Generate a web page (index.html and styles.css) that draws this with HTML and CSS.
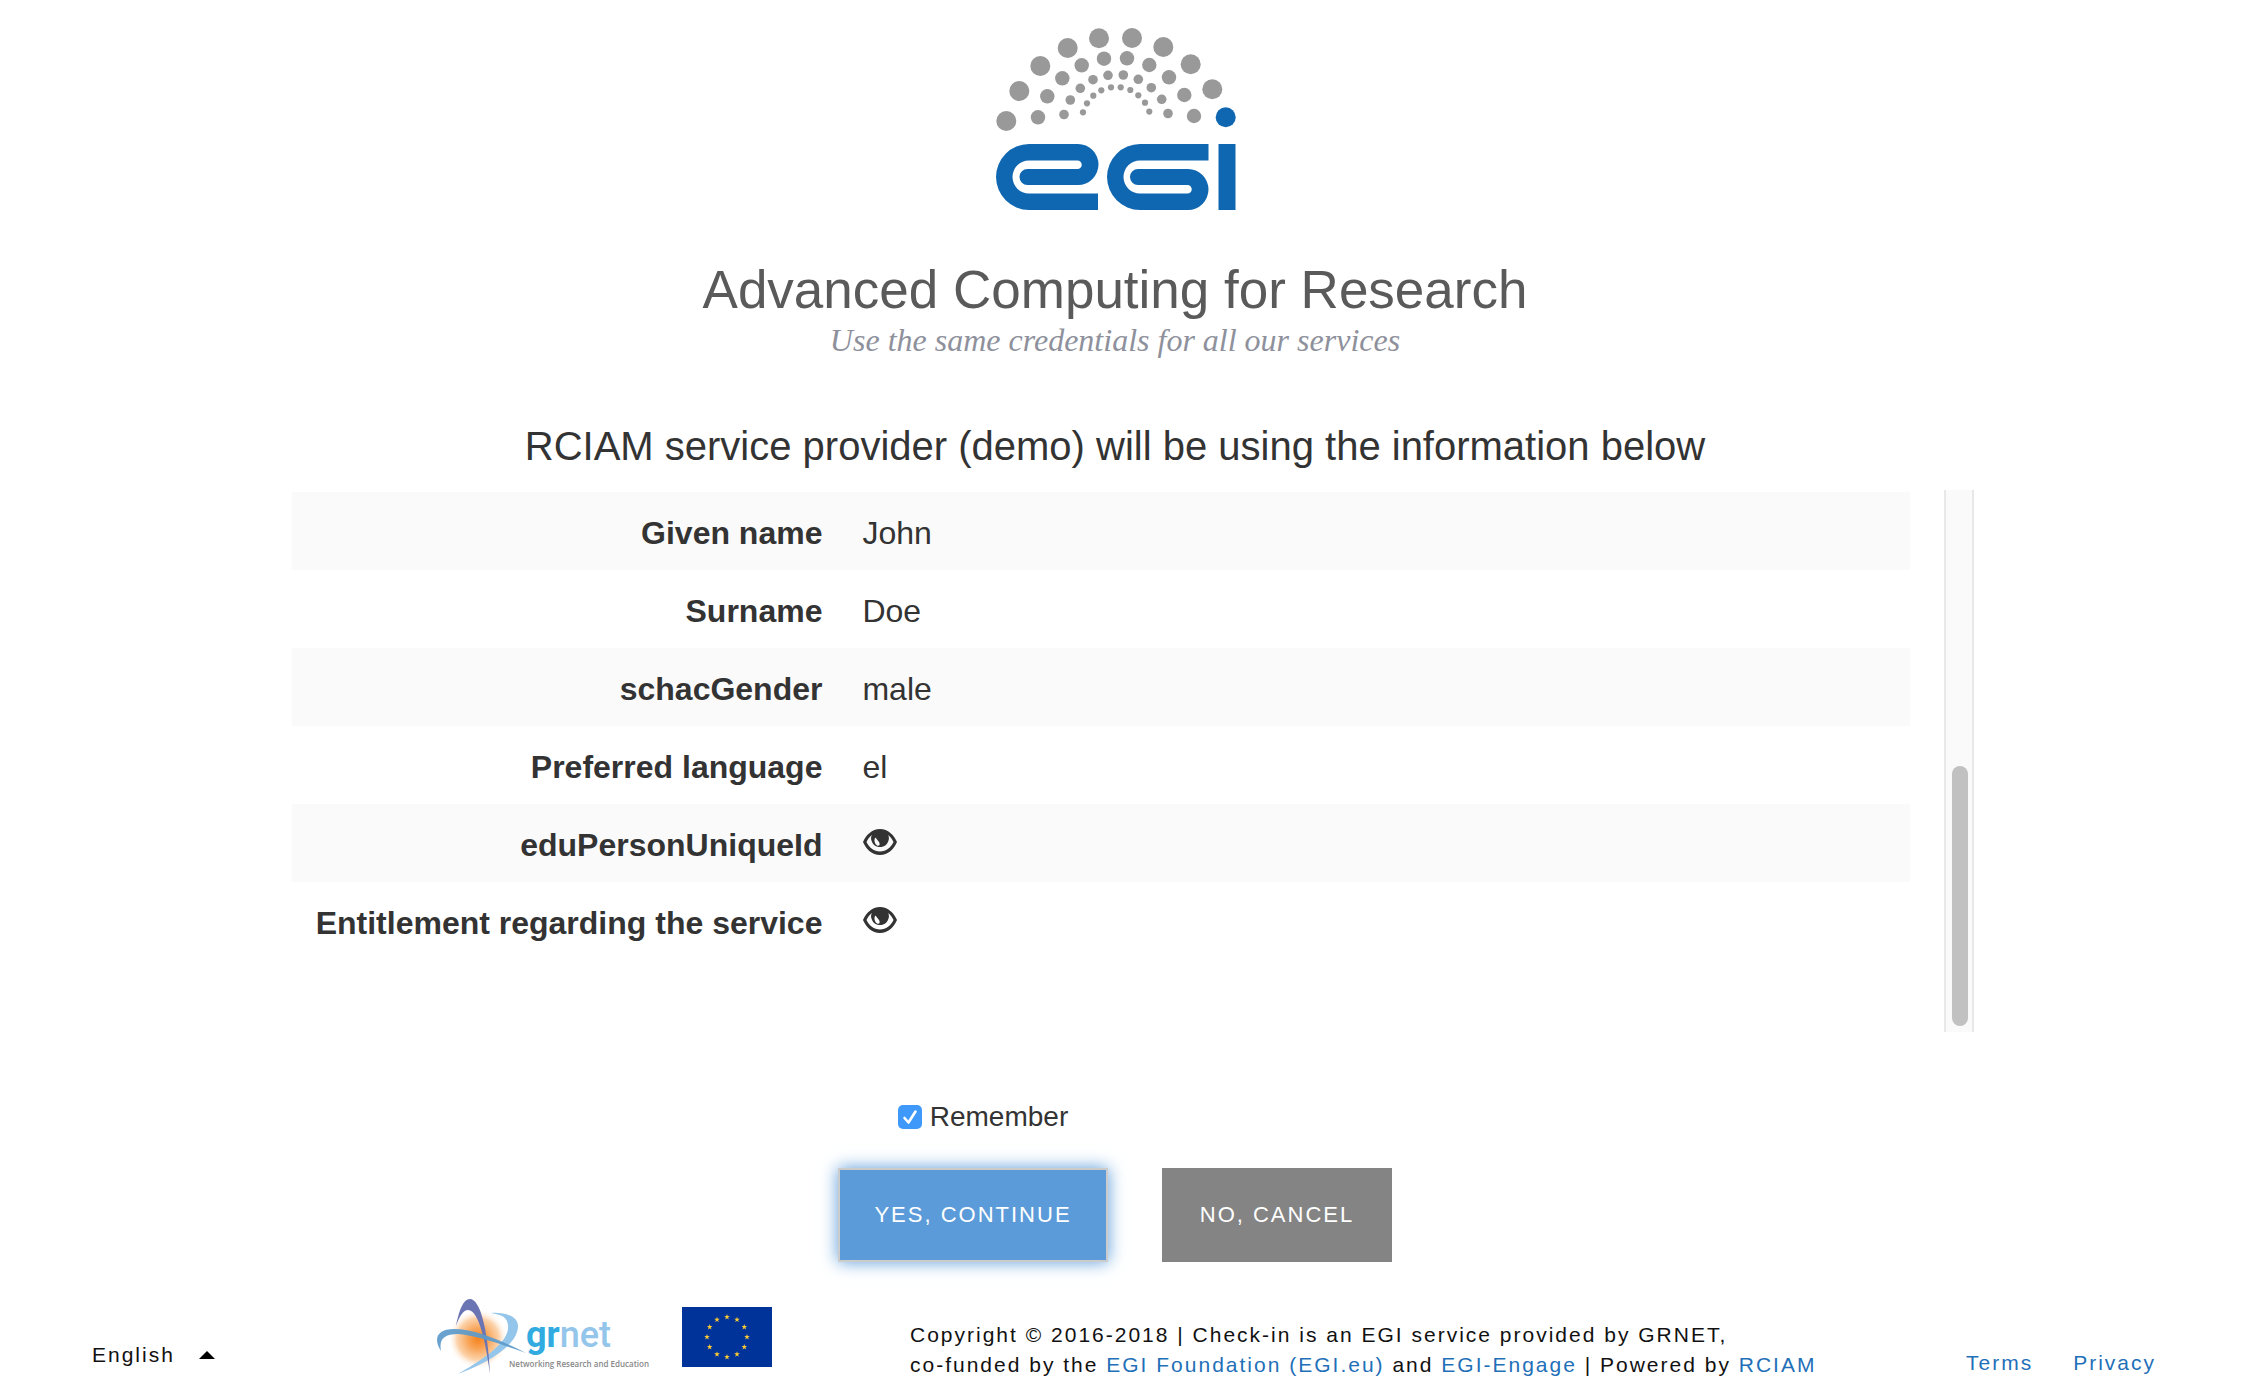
FILE: index.html
```html
<!DOCTYPE html>
<html lang="en">
<head>
<meta charset="utf-8">
<title>EGI Check-in</title>
<link rel="stylesheet" href="styles.css">
</head>
<body>
<svg class="sprite" aria-hidden="true">
  <symbol id="eye" viewBox="0 0 34 26">
    <path fill="currentColor" fill-rule="evenodd" d="M17 0C25 0 31 6 34 13C31 20 25 26 17 26C9 26 3 20 0 13C3 6 9 0 17 0ZM9 6C6.500 8 4.500 10.500 3.500 13C6 18.500 11 22.500 17 22.500C23 22.500 28 18.500 30.500 13C29.500 10.500 27.500 8 25 6C26 8 26.200 9 25.700 11C24.500 15.500 21.500 18 17 18C12.500 18 9.500 15.500 8.300 11C7.800 9 8 8 9 6ZM12.500 8.500C11 10 11.200 13 12.500 15C13.800 17 16 17.300 16.500 16C17 14.500 16 12.500 14.800 11.500C13.800 10.500 13.500 9.500 12.500 8.500Z"/>
  </symbol>
  <symbol id="star" viewBox="-1 -1 2 2">
    <polygon fill="#fc3" points="0,-1 .225,-.309 .951,-.309 .363,.118 .588,.809 0,.382 -.588,.809 -.363,.118 -.951,-.309 -.225,-.309"/>
  </symbol>
</svg>
<div class="page">
  <header class="banner">
    <svg class="logo" viewBox="0 0 240 184" role="img" aria-label="EGI">
      <g fill="#999">
        <g><circle cx="10.300" cy="94" r="10"/><circle cx="23.300" cy="64" r="10"/><circle cx="44.300" cy="39" r="10"/><circle cx="71.700" cy="21" r="10"/><circle cx="103" cy="11.300" r="10"/><circle cx="136" cy="11" r="10"/><circle cx="167.300" cy="20" r="10"/><circle cx="194.700" cy="37.300" r="10"/><circle cx="216.300" cy="62.300" r="10"/></g>
        <g><circle cx="42" cy="90.300" r="7.200"/><circle cx="51.300" cy="69.300" r="7.200"/><circle cx="66.300" cy="51.300" r="7.200"/><circle cx="85.700" cy="38.300" r="7.200"/><circle cx="108" cy="31.700" r="7.200"/><circle cx="131" cy="31.300" r="7.200"/><circle cx="153.300" cy="38" r="7.200"/><circle cx="173" cy="50.300" r="7.200"/><circle cx="188.300" cy="68" r="7.200"/><circle cx="198" cy="89" r="7.200"/></g>
        <g><circle cx="68" cy="87.500" r="4.800"/><circle cx="74.300" cy="73" r="4.800"/><circle cx="84.300" cy="61.300" r="4.800"/><circle cx="97" cy="52.700" r="4.800"/><circle cx="112" cy="48.300" r="4.800"/><circle cx="127.300" cy="48" r="4.800"/><circle cx="142.300" cy="52.300" r="4.800"/><circle cx="155.300" cy="60.700" r="4.800"/><circle cx="165.700" cy="72.300" r="4.800"/><circle cx="172" cy="86.500" r="4.800"/></g>
        <g><circle cx="87" cy="85.300" r="3.100"/><circle cx="91" cy="76.300" r="3.100"/><circle cx="97.300" cy="68.700" r="3.100"/><circle cx="105.300" cy="63.300" r="3.100"/><circle cx="115" cy="60.300" r="3.100"/><circle cx="124.700" cy="60.300" r="3.100"/><circle cx="134.300" cy="63" r="3.100"/><circle cx="142.300" cy="68.300" r="3.100"/><circle cx="149" cy="75.700" r="3.100"/><circle cx="153.300" cy="84.600" r="3.100"/></g>
      </g>
      <g fill="#1067b1">
        <circle cx="229.700" cy="90.300" r="10"/>
        <rect x="222.500" y="117" width="17" height="66"/>
        <path d="M33 117H82A20.500 20.500 0 0 1 82 158H31.500A8 8 0 0 1 31.500 142H81.500A4.200 4.200 0 0 0 81.500 133.500H33A16.500 16.500 0 0 0 33 166.500H102V183H33A33 33 0 0 1 33 117Z"/>
        <path d="M144 117H212.500V133.500H144A16.500 16.500 0 0 0 144 166.500H191.500A4 4 0 0 0 191.500 158H142A8 8 0 0 1 142 142H192A20.500 20.500 0 0 1 192 183H144A33 33 0 0 1 144 117Z"/>
      </g>
    </svg>
    <h1 class="title">Advanced Computing for Research</h1>
    <p class="tagline">Use the same credentials for all our services</p>
  </header>
  <main class="consent">
    <h2 class="notice">RCIAM service provider (demo) will be using the information below</h2>
    <div class="scroller">
      <table class="attributes">
        <tbody>
          <tr><th scope="row">Given name</th><td>John</td></tr>
          <tr><th scope="row">Surname</th><td>Doe</td></tr>
          <tr><th scope="row">schacGender</th><td>male</td></tr>
          <tr><th scope="row">Preferred language</th><td>el</td></tr>
          <tr><th scope="row">eduPersonUniqueId</th><td><button class="reveal" type="button" aria-label="Show eduPersonUniqueId"><svg><use href="#eye"/></svg></button></td></tr>
          <tr><th scope="row">Entitlement regarding the service</th><td><button class="reveal" type="button" aria-label="Show entitlement"><svg><use href="#eye"/></svg></button></td></tr>
        </tbody>
      </table>
      <div class="track"><div class="thumb"></div></div>
    </div>
    <form class="decision">
      <div class="remember">
        <span class="check">
          <input type="checkbox" id="remember" checked>
          <svg class="tick" viewBox="0 0 24 24" aria-hidden="true"><path d="M6.500 13L10.500 17.500L17.500 6.500" fill="none" stroke="#fff" stroke-width="2.600" stroke-linecap="round" stroke-linejoin="round"/></svg>
        </span>
        <label for="remember">Remember</label>
      </div>
      <div class="buttons">
        <button class="btn yes" type="button">YES, CONTINUE</button>
        <button class="btn no" type="button">NO, CANCEL</button>
      </div>
    </form>
  </main>
</div>
<footer class="footer">
  <button class="language" type="button">English<span class="caret"></span></button>
  <div class="partners">
    <svg class="grnet" viewBox="0 0 220 76" role="img" aria-label="grnet Networking Research and Education">
      <defs><radialGradient id="glow"><stop offset="0" stop-color="#f5841f"/><stop offset=".3" stop-color="#f8a050"/><stop offset=".7" stop-color="#fcd3ab"/><stop offset="1" stop-color="#fff" stop-opacity="0"/></radialGradient></defs>
      <circle cx="42" cy="40" r="30" fill="url(#glow)"/>
      <path fill="#94c5ea" d="M55 14C68 13 82 17 82 27C82 46 52 64 22 75C44 62 70 46 72 30C73 18 66 16 55 14Z"/>
      <path fill="#6c75b3" d="M20 27C23 12 27 0 34 0C44 0 52 30 54 75C50 45 43 11 32 11C27 11 23 18 20 27Z"/>
      <path fill="#5c9aca" fill-opacity=".92" d="M5 52C-3 40 1 30 18 30C40 30 66 42 90 54C62 44 38 36 22 35C7 35 3 41 5 52Z"/>
      <text class="grnet-name" x="90" y="48"><tspan class="grnet-gr">gr</tspan><tspan class="grnet-net">net</tspan></text>
      <text class="grnet-sub" x="73" y="68">Networking Research and Education</text>
    </svg>
    <svg class="flag" viewBox="0 0 90 60" role="img" aria-label="European Union">
      <rect width="90" height="60" fill="#039"/>
      <g>
        <use href="#star" x="42" y="7" width="6" height="6"/><use href="#star" x="52" y="9.700" width="6" height="6"/><use href="#star" x="59.300" y="17" width="6" height="6"/><use href="#star" x="62" y="27" width="6" height="6"/><use href="#star" x="59.300" y="37" width="6" height="6"/><use href="#star" x="52" y="44.300" width="6" height="6"/><use href="#star" x="42" y="47" width="6" height="6"/><use href="#star" x="32" y="44.300" width="6" height="6"/><use href="#star" x="24.700" y="37" width="6" height="6"/><use href="#star" x="22" y="27" width="6" height="6"/><use href="#star" x="24.700" y="17" width="6" height="6"/><use href="#star" x="32" y="9.700" width="6" height="6"/>
      </g>
    </svg>
  </div>
  <p class="copyright">Copyright © 2016-2018 | Check-in is an EGI service provided by GRNET,<br>co-funded by the <a href="#">EGI Foundation (EGI.eu)</a> and <a href="#">EGI-Engage</a> | Powered by <a href="#">RCIAM</a></p>
  <nav class="legal"><a href="#">Terms</a><a href="#">Privacy</a></nav>
</footer>
</body>
</html>
```
FILE: styles.css
```css
* {
  box-sizing: border-box;
}

body {
  margin: 0;
  background: #fff;
  color: #333;
  font-family: "Liberation Sans", Arial, sans-serif;
}

h1, h2, p {
  margin: 0;
  font-weight: 400;
}

a {
  color: #1f70b8;
  text-decoration: none;
}

button {
  font: inherit;
  cursor: pointer;
}

.sprite {
  display: none;
}

.page {
  padding: 27px 12px 0 0;
}

.banner {
  display: flex;
  flex-direction: column;
  align-items: center;
  text-align: center;
}

.logo {
  width: 240px;
  height: 184px;
  margin-left: 2px;
}

.title {
  margin-top: 49px;
  color: #5a5a5a;
  font-size: 53px;
  line-height: 60px;
}

.tagline {
  color: #8e919c;
  font-family: "Liberation Serif", "Times New Roman", serif;
  font-size: 32px;
  font-style: italic;
  line-height: 40px;
}

.notice {
  margin-top: 62px;
  font-size: 40px;
  line-height: 48px;
  text-align: center;
}

.scroller {
  display: flex;
  justify-content: space-between;
  width: 77%;
  min-height: 542px;
  margin: 20px auto 0;
  padding-left: 36px;
}

.attributes {
  align-self: flex-start;
  width: 97%;
  max-width: 1618px;
  margin-top: 2px;
  border-collapse: collapse;
  font-size: 32px;
  line-height: 38px;
}

.attributes tr:nth-child(odd) {
  background: #fafafa;
}

.attributes th,
.attributes td {
  height: 78px;
  padding: 4px 20px 0;
  text-align: left;
}

.attributes th {
  width: 550px;
  text-align: right;
}

.reveal {
  display: block;
  padding: 0 0 6px;
  border: 0;
  background: none;
  color: #333;
}

.reveal svg {
  display: block;
  width: 36px;
  height: 26px;
}

.track {
  width: 30px;
  padding: 276px 4px 6px 6px;
  border: solid #e8e8e8;
  border-width: 0 2px;
  background: #fafafa;
}

.thumb {
  height: 100%;
  border-radius: 8px;
  background: #c1c1c1;
}

.decision {
  display: flex;
  flex-direction: column;
  align-items: center;
  margin-top: 67px;
}

.remember {
  display: flex;
  align-items: center;
  gap: 8px;
  margin-right: 264px;
  font-size: 28px;
  line-height: 36px;
}

.check {
  display: grid;
}

.check input,
.tick {
  grid-area: 1 / 1;
  width: 24px;
  height: 24px;
  margin: 0;
}

.check input {
  appearance: none;
  border-radius: 5px;
  background: #ccc;
}

.check input:checked {
  background: #3f99fb;
}

.tick {
  pointer-events: none;
}

.buttons {
  display: flex;
  gap: 54px;
  margin-top: 33px;
}

.btn {
  height: 94px;
  border: 2px solid #848484;
  background: #848484;
  color: #fff;
  font-size: 22px;
  letter-spacing: 2px;
}

.yes {
  width: 270px;
  border-color: #ccc;
  background: #5b9bd9;
  box-shadow: 0 0 16px #5b9bd9;
}

.no {
  width: 230px;
}

.footer {
  display: grid;
  grid-template-columns: 344px 474px 1fr auto;
  align-items: start;
  padding: 36px 86px 0 92px;
  color: #111;
  font-size: 21px;
  letter-spacing: 2px;
  line-height: 30px;
}

.language {
  display: flex;
  align-items: center;
  gap: 24px;
  margin-top: 42px;
  padding: 0;
  border: 0;
  background: none;
  color: #111;
  letter-spacing: 2px;
}

.caret {
  border: solid transparent;
  border-width: 0 8px 8px;
  border-bottom-color: #000;
}

.partners {
  display: flex;
  align-items: center;
  gap: 26px;
  padding-top: 1px;
}

.grnet {
  width: 220px;
  height: 76px;
}

.grnet-name {
  font: 500 36px Roboto, sans-serif;
  letter-spacing: 0;
}

.grnet-gr {
  fill: #31abe0;
  font-weight: 700;
}

.grnet-net {
  fill: #94c5ea;
}

.grnet-sub {
  fill: #888;
  font: 600 8px "Open Sans", sans-serif;
  letter-spacing: 0;
}

.flag {
  width: 90px;
  height: 60px;
}

.copyright {
  margin-top: 22px;
}

.legal {
  display: flex;
  gap: 40px;
  margin-top: 50px;
}
```
